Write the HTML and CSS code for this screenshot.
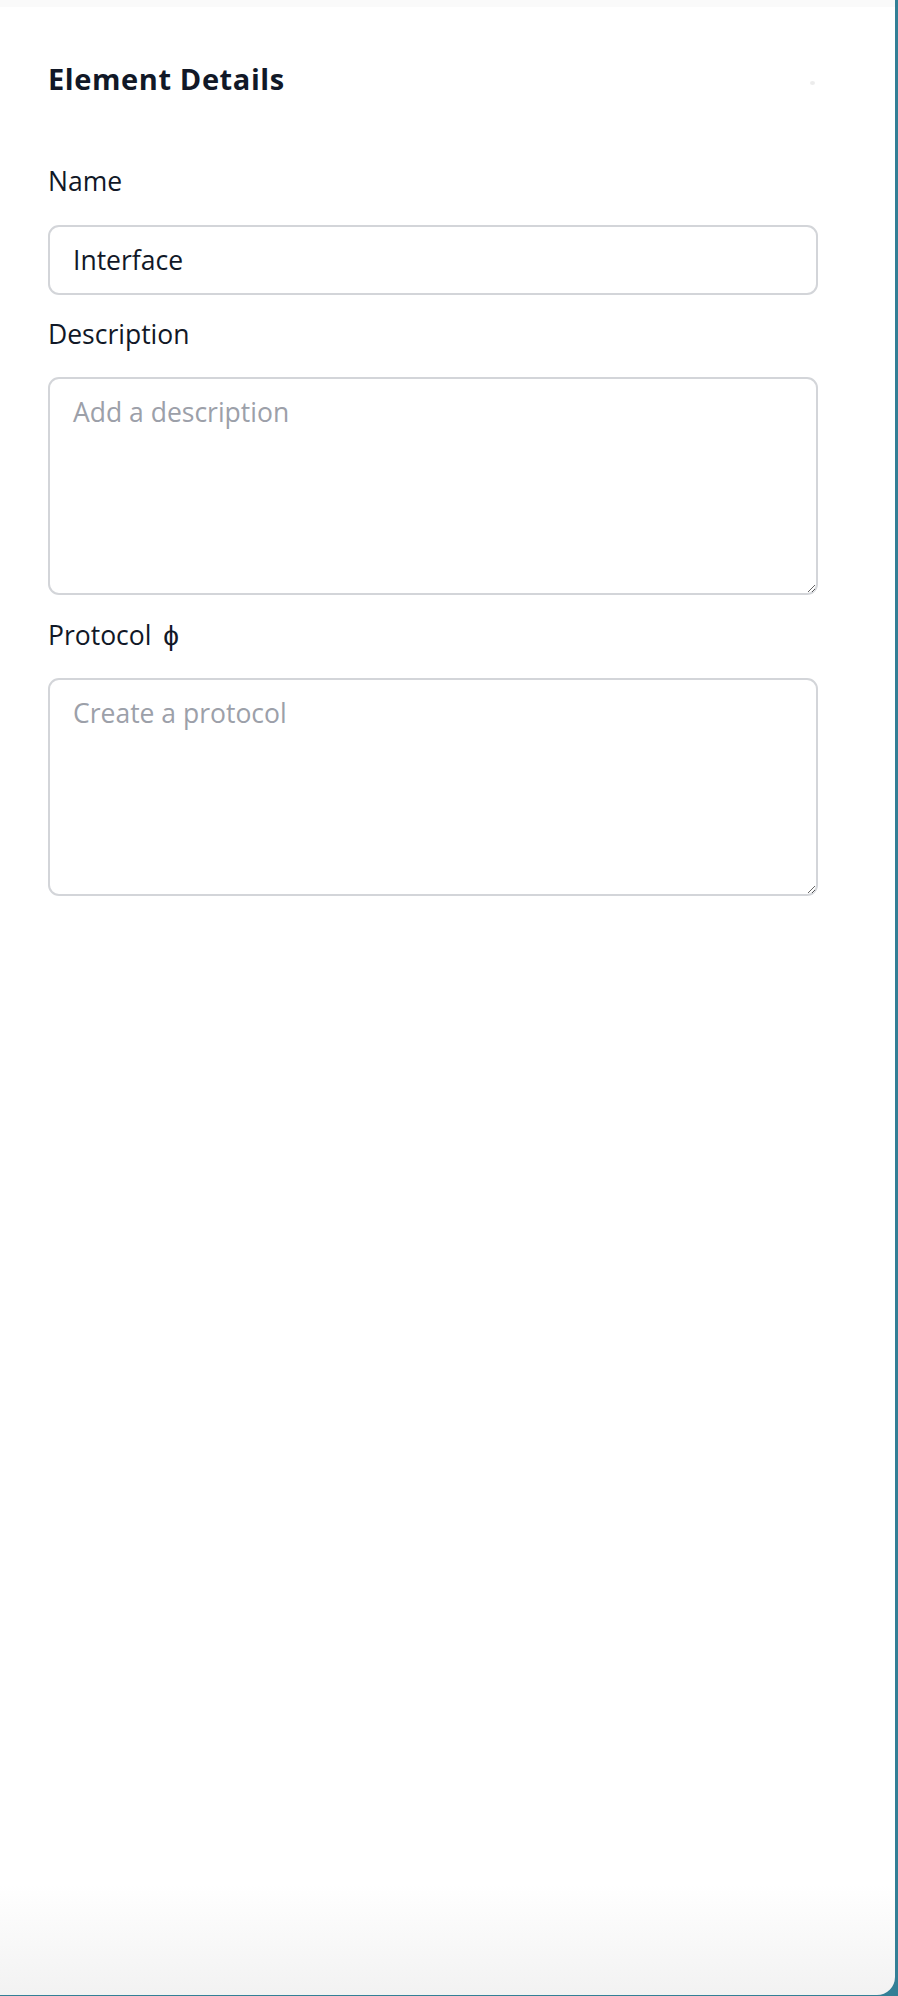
FILE: index.html
```
<!DOCTYPE html>
<html lang="en">
<head>
<meta charset="utf-8">
<title>Element Details</title>
<link rel="stylesheet" href="styles.css">
</head>
<body>
<div class="panel">
  <div class="topband"></div>
  <div class="content">
    <div class="header">
      <h2 class="title">Element Details</h2>
      <span class="close-dot"></span>
    </div>
    <div class="field first">
      <label class="label" for="name">Name</label>
      <input class="input" id="name" type="text" value="Interface">
    </div>
    <div class="field">
      <label class="label" for="desc">Description</label>
      <textarea class="textarea" id="desc" placeholder="Add a description"></textarea>
    </div>
    <div class="field">
      <label class="label" for="proto">Protocol <span class="phi">ϕ</span></label>
      <textarea class="textarea" id="proto" placeholder="Create a protocol"></textarea>
    </div>
  </div>
</div>
</body>
</html>
```
FILE: styles.css
```
html, body {
  margin: 0;
  padding: 0;
}
body {
  background: #337f96;
  width: 898px;
  height: 1996px;
  overflow: hidden;
  font-family: "Open Sans", "Liberation Sans", sans-serif;
  color: #111827;
}
.panel {
  width: 895px;
  height: 1995px;
  background: linear-gradient(to bottom, #ffffff 0, #ffffff calc(100% - 110px), #f2f2f2 100%);
  border-bottom-right-radius: 18px;
  box-sizing: border-box;
}
.topband {
  height: 7px;
  background: #fafafa;
}
.content {
  padding: 53px 77px 0 48px;
}
.header {
  display: flex;
  align-items: center;
  justify-content: space-between;
  height: 38px;
}
.title {
  margin: 0;
  font-size: 29px;
  line-height: 38px;
  font-weight: 700;
  letter-spacing: 0.6px;
  color: #111827;
}
.close-dot {
  width: 5px;
  height: 4px;
  border-radius: 50%;
  background: #ececec;
  margin-right: 3px;
  margin-top: 8px;
}
.field {
  display: flex;
  flex-direction: column;
  margin-top: 21px;
}
.field.first {
  margin-top: 65px;
}
.label {
  font-size: 26.5px;
  line-height: 36px;
  margin-bottom: 25px;
  color: #111827;
}
.phi {
  display: inline-block;
  margin-left: 5px;
  font-size: 28px;
}
.input,
.textarea {
  font-family: "Open Sans", "Liberation Sans", sans-serif;
  font-size: 26.5px;
  line-height: 36px;
  color: #111827;
  border: 2px solid #d3d5d9;
  border-radius: 11px;
  padding: 15px 23px;
  margin: 0;
  box-sizing: border-box;
  width: 770px;
  background: #ffffff;
  outline: none;
}
.field.first .input {
  margin-top: 1px;
}
.input {
  height: 70px;
}
.textarea {
  height: 218px;
  resize: vertical;
}
.input::placeholder,
.textarea::placeholder {
  color: #9ca0a9;
  opacity: 1;
}
```
